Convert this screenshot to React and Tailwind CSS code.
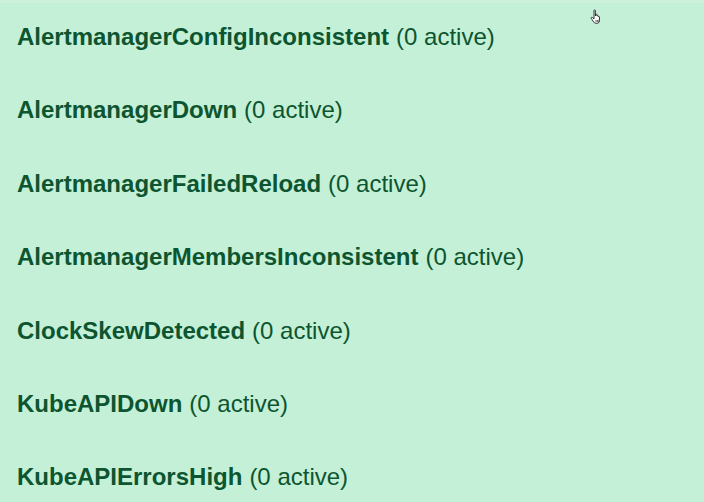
import React from "react";

const alerts = [
  "AlertmanagerConfigInconsistent",
  "AlertmanagerDown",
  "AlertmanagerFailedReload",
  "AlertmanagerMembersInconsistent",
  "ClockSkewDetected",
  "KubeAPIDown",
  "KubeAPIErrorsHigh",
];

const HandCursor = () => (
  <svg width="14" height="16" viewBox="0 0 14 16" className="absolute left-[590px] top-[9px]">
    <path
      d="M4 1.5c0-.8 1.4-.8 1.4 0V7l.3-1.3c.2-.8 1.4-.6 1.3.2l-.1 1c.2-.8 1.4-.6 1.3.2v.7c.2-.7 1.3-.5 1.3.3v3.4c0 1.6-1 2.8-2.6 2.8H6c-1.1 0-1.8-.5-2.4-1.4L1.3 9.4c-.5-.8.5-1.6 1.2-.9L4 10V1.5z"
      fill="#fff"
      stroke="#222"
      strokeWidth="0.9"
      strokeLinejoin="round"
    />
    <path d="M6 11v2M7.4 11v2M8.8 11v2" stroke="#222" strokeWidth="0.7" />
  </svg>
);

export default function App() {
  return (
    <div className="relative w-[704px] h-[502px] overflow-hidden bg-[#c3f0d6] font-['Liberation_Sans',Arial,sans-serif] text-[#0d5530]">
      <div className="h-[3px] bg-[#cdf2d9]" />
      <div className="flex flex-col -mt-[2.7px] pl-[17px]">
        {alerts.map((name) => (
          <div key={name} className="h-[73.4px] flex items-center text-[24px] leading-none">
            <span className="font-bold">{name}</span>
            <span className="ml-[7px]">(0 active)</span>
          </div>
        ))}
      </div>
      <HandCursor />
    </div>
  );
}
